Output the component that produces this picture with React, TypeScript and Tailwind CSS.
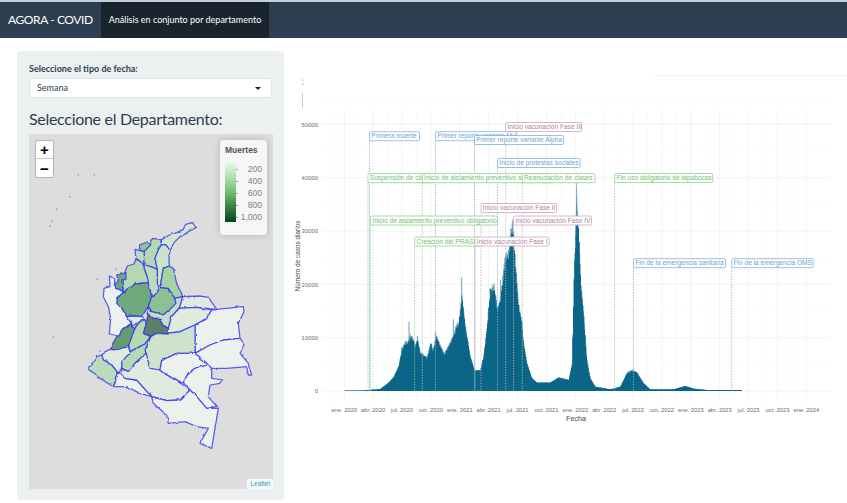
const BLUE = '#7fb2d9';
const GREEN = '#8fd08b';
const PINK = '#cba6bc';

// departments, traced in a 3x grid of the map; neighbours share vertices
const DEPARTMENTS: { points: string; fill: string }[] = [
  { points: '424,150 448,135 470,128 490,118 497,103 518,98 527,114 505,125 480,140 462,158 450,182 438,165 424,165', fill: '#d0e6cd' },
  { points: '372,185 390,165 398,145 422,148 424,165 415,180 405,205 412,238 392,230 375,225', fill: '#b5d9b2' },
  { points: '358,165 385,155 392,165 372,185 360,182', fill: '#8fc592' },
  { points: '424,165 438,165 450,182 447,205 448,228 430,235 425,265 420,292 412,285 412,238 405,205 415,180', fill: '#cbe3c8' },
  { points: '345,178 360,182 372,185 375,225 392,230 412,238 412,285 413,305 400,320 385,290 382,262 372,235 372,222 348,208', fill: '#bcdcb9' },
  { points: '322,228 342,222 348,208 372,222 372,235 382,262 385,278 345,282 310,305 305,270 315,245', fill: '#b5d9b2' },
  { points: '290,255 318,248 318,268 305,270 310,305 290,295 283,285 295,272', fill: '#6ca877' },
  { points: '310,305 345,282 385,278 395,320 385,350 365,380 340,378 320,380 305,355 290,340 292,325', fill: '#6fa97e' },
  { points: '268,255 284,270 283,285 290,295 310,305 292,325 290,340 305,355 320,380 335,400 305,420 298,438 268,432 272,385 265,350 250,320 252,295 270,290', fill: '#edf1ee' },
  { points: '320,380 340,378 365,380 375,390 360,395 335,410 335,400', fill: '#dfeade' },
  { points: '385,350 395,320 400,320 413,305 420,292 445,295 465,325 468,340 450,358 430,375 395,365', fill: '#8cc095' },
  { points: '430,235 448,228 460,235 470,280 488,320 465,325 445,295 420,292 425,265', fill: '#a5d3a3' },
  { points: '385,350 395,365 430,375 450,358 468,340 465,325 488,320 480,350 455,380 445,415 428,405 418,385 400,385 385,370', fill: '#c5dfc2' },
  { points: '488,320 540,318 565,322 590,358 530,352 478,355 480,350', fill: '#e0ebdf' },
  { points: '478,355 530,352 575,360 560,385 525,405 480,425 445,430 445,415 455,380', fill: '#e0ebdf' },
  { points: '590,358 670,350 672,365 655,400 660,445 610,450 570,465 525,490 525,405 560,385 575,360', fill: '#edf1ee' },
  { points: '385,370 400,385 418,385 428,405 445,415 445,432 410,430 392,440 370,430 378,400', fill: '#5b7f6c' },
  { points: '375,390 378,400 370,430 392,440 375,462 360,470 330,485 325,460 345,415 360,395', fill: '#b5d9b2' },
  { points: '305,420 335,400 335,410 345,415 335,440 325,470 290,480 268,478 290,440 298,438', fill: '#649b73' },
  { points: '445,432 445,430 480,425 525,405 525,490 470,490 425,512 420,540 390,535 378,490 375,480 392,440 410,430', fill: '#cde4ca' },
  { points: '392,440 375,480 378,490 345,520 325,545 305,535 305,515 328,490 330,485 360,470 375,462', fill: '#b5d9b2' },
  { points: '268,478 290,480 325,470 330,485 328,490 305,515 305,535 295,550 275,525 250,510 245,495', fill: '#e0ebdf' },
  { points: '230,500 245,495 250,510 275,525 295,550 280,590 240,565 205,538', fill: '#bcdcb9' },
  { points: '295,550 305,550 315,565 350,570 395,620 360,610 320,590 280,590', fill: '#edf1ee' },
  { points: '378,490 390,535 420,540 425,545 480,578 510,600 480,630 440,632 395,620 350,570 315,565 305,550 305,535 325,545 345,520', fill: '#e0ebdf' },
  { points: '425,512 470,490 525,490 550,510 565,525 525,535 505,550 490,578 480,578 425,545 420,540', fill: '#edf1ee' },
  { points: '525,490 570,465 610,450 660,445 675,465 660,490 685,520 695,555 685,555 680,530 620,535 575,535 565,525 550,510', fill: '#edf1ee' },
  { points: '505,550 525,535 565,525 575,535 575,565 605,570 600,580 570,585 565,620 590,650 560,655 530,620 510,600 490,578', fill: '#edf1ee' },
  { points: '395,620 440,632 480,630 510,600 530,620 560,655 595,655 575,775 540,760 565,715 530,710 495,695 445,700 440,675 400,640', fill: '#edf1ee' },
];

const ISLANDS = [[150, 20], [110, 58], [95, 93], [91, 108], [287, 238], [232, 268], [100, 442], [240, 484], [175, -46], [223, -46]];

const MONTHS = [
  'ene. 2020', 'abr. 2020', 'jul. 2020', 'oct. 2020', 'ene. 2021', 'abr. 2021', 'jul. 2021', 'oct. 2021',
  'ene. 2022', 'abr. 2022', 'jul. 2022', 'oct. 2022', 'ene. 2023', 'abr. 2023', 'jul. 2023', 'oct. 2023', 'ene. 2024',
];

// label box x / width, y, line x, colour. Order matters: later boxes cover earlier ones
const EVENTS = [
  { text: 'Primera muerte', x: 369.5, w: 50, y: 131.7, line: 369.5, color: BLUE },
  { text: 'Primer reporte variante Mu', x: 435.5, w: 81, y: 131.7, line: 435.5, color: BLUE },
  { text: 'Inicio vacunación Fase III', x: 505.7, w: 76, y: 122.5, line: 505.7, color: PINK },
  { text: 'Primer reporte variante Alpha', x: 474.5, w: 89, y: 135.5, line: 474.5, color: BLUE },
  { text: 'Inicio de protestas sociales', x: 497.5, w: 82.5, y: 158.5, line: 497.5, color: BLUE },
  { text: 'Suspensión de clases', x: 368, w: 64, y: 173.7, line: 368, color: GREEN },
  { text: 'Inicio de aislamiento preventivo sostenible', x: 422.3, w: 130, y: 173.7, line: 422.3, color: GREEN },
  { text: 'Reanudación de clases', x: 522.3, w: 72.7, y: 173.7, line: 522.3, color: GREEN },
  { text: 'Fin uso obligatorio de tapabocas', x: 614.7, w: 98, y: 173.5, line: 614.7, color: GREEN },
  { text: 'Inicio vacunación Fase II', x: 481, w: 75.7, y: 203.5, line: 481, color: PINK },
  { text: 'Inicio de aislamiento preventivo obligatorio', x: 370.5, w: 127, y: 216, line: 370.5, color: GREEN },
  { text: 'Inicio vacunación Fase IV', x: 513.5, w: 78, y: 216, line: 513.5, color: PINK },
  { text: 'Creación del PRASS', x: 414.7, w: 66, y: 237, line: 414.7, color: GREEN },
  { text: 'Inicio vacunación Fase I', x: 475, w: 74, y: 237, line: 475, color: PINK },
  { text: 'Fin de la emergencia sanitaria', x: 633.5, w: 92, y: 258.7, line: 633.5, color: BLUE },
  { text: 'Fin de la emergencia OMS', x: 731.7, w: 81.5, y: 258.7, line: 731.7, color: BLUE },
];

const TEXT_COLORS: Record<string, string> = { [BLUE]: '#6aa5d2', [GREEN]: '#72c06d', [PINK]: '#b27f9c' };

// case curve, in a 3x grid whose origin is page (290, 240)
const CURVE: [number, number][] = [
  [163, 452], [220, 451], [270, 447], [295, 428], [310, 412], [325, 380], [335, 330], [345, 310], [352, 312], [360, 290],
  [368, 300], [375, 320], [382, 300], [390, 340], [410, 355], [422, 310], [428, 335], [438, 290], [450, 320], [462, 345],
  [475, 320], [490, 290], [498, 262], [505, 255], [515, 170], [525, 260], [540, 350], [553, 392], [570, 392], [580, 350],
  [590, 265], [600, 155], [612, 150], [622, 215], [632, 170], [645, 60], [655, 50], [662, -15], [668, -35], [672, 30],
  [685, 200], [695, 250], [700, 310], [710, 370], [725, 415], [740, 428], [780, 428], [805, 413], [835, 420], [845, 375],
  [852, 80], [858, -50], [862, -60], [866, -10], [872, 140], [880, 220], [890, 360], [900, 415], [915, 440],
  [960, 448], [990, 440], [1010, 400], [1025, 392], [1040, 398], [1060, 430], [1080, 448], [1150, 448],
  [1185, 438], [1210, 446], [1250, 450], [1355, 450],
];

// lighter daily spikes that stand above the weekly curve: x, top
const SPIKES = [[335, 322], [357, 245], [382, 288], [436, 275], [490, 238], [515, 112], [600, 145], [612, 130], [632, 120], [648, 50]];

function curveAt(x: number) {
  for (let i = 1; i < CURVE.length; i++) {
    const [x0, y0] = CURVE[i - 1];
    const [x1, y1] = CURVE[i];
    if (x <= x1) return y0 + ((y1 - y0) * (x - x0)) / (x1 - x0);
  }
  return 452;
}

function noise(i: number) {
  const v = Math.sin(i * 12.9898) * 43758.5453;
  return v - Math.floor(v);
}

function buildAreas() {
  let dark = 'M344.3 391';
  let light = 'M344.3 391';
  for (let x = 163; x <= 1355; x += 2) {
    const base = curveAt(x);
    const height = 453 - base;
    const jitter = noise(Math.floor(x / 2));
    const px = 290 + x / 3;
    const next = (px + 0.67).toFixed(1);
    const dy = (240 + (base + height * 0.07 * (jitter - 0.5)) / 3).toFixed(1);
    const ly = (240 + (base - height * (0.01 + 0.06 * jitter)) / 3).toFixed(1);
    dark += `L${px.toFixed(1)} ${dy}L${next} ${dy}`;
    light += `L${px.toFixed(1)} ${ly}L${next} ${ly}`;
  }
  return { dark: `${dark}L741.7 391Z`, light: `${light}L741.7 391Z` };
}

function CasesChart() {
  const { dark, light } = buildAreas();
  const top = 110;
  const bottom = 403;
  const yTicks = [0, 10000, 20000, 30000, 40000, 50000];
  const xOf = (i: number) => 344.3 + i * 28.88;
  const yOf = (v: number) => 391 - v * 0.005333;

  return (
    <svg viewBox="290 38 557 465" className="w-[557px] h-[465px] block" style={{ fontFamily: '"Liberation Sans", Arial, sans-serif' }}>
      <line x1="652" x2="847" y1="75.5" y2="75.5" stroke="#f0f0f0" strokeWidth="0.8" />
      <rect x="302" y="79" width="1.5" height="3" fill="#f5d9ae" />
      <rect x="302" y="83.5" width="1.5" height="1.5" fill="#e8a860" />
      <line x1="302.5" x2="302.5" y1="93" y2="108" stroke="#cccccc" strokeWidth="1" />

      {MONTHS.map((_, i) => (
        <g key={i}>
          <line x1={xOf(i)} x2={xOf(i)} y1={top} y2={bottom} stroke="#f0f0f0" strokeWidth="0.8" />
          <line x1={xOf(i) - 14.44} x2={xOf(i) - 14.44} y1={top} y2={bottom} stroke="#f7f7f7" strokeWidth="0.6" />
        </g>
      ))}
      {yTicks.map((v) => (
        <g key={v}>
          <line x1="322" x2="831" y1={yOf(v)} y2={yOf(v)} stroke="#f0f0f0" strokeWidth="0.8" />
          <line x1="322" x2="831" y1={yOf(v + 5000)} y2={yOf(v + 5000)} stroke="#f7f7f7" strokeWidth="0.6" />
          <text x="318" y={yOf(v) + 2.2} textAnchor="end" fontSize="5.9" fill="#6b6b6b">{v}</text>
        </g>
      ))}

      <path d={light} fill="#6ba3ba" />
      {SPIKES.map(([x, y]) => (
        <rect key={x} x={290 + x / 3 - 0.5} y={240 + y / 3} width="1" height={(curveAt(x) - y) / 3 + 2} fill="#6ba3ba" />
      ))}
      <path d="M575 240 L576 210 L576.7 169 L577.4 210 L578.6 240Z" fill="#4f93ae" />
      <path d={dark} fill="#0a6587" />

      {EVENTS.map((e) => (
        <line key={`l-${e.text}`} x1={e.line} x2={e.line} y1={e.y + 9} y2="391" stroke={e.color} strokeWidth="0.8" strokeDasharray="1.5 1.2" />
      ))}
      {EVENTS.map((e) => (
        <g key={e.text}>
          <rect x={e.x} y={e.y} width={e.w} height="9" rx="1.5" fill="#ffffff" stroke={e.color} strokeWidth="0.8" />
          <text x={e.x + 1.8} y={e.y + 6.7} fontSize="6.6" fill={TEXT_COLORS[e.color]}>
            {e.text}
          </text>
        </g>
      ))}

      {MONTHS.map((m, i) => (
        <text key={m} x={xOf(i)} y="412" textAnchor="middle" fontSize="5.8" fill="#6b6b6b">{m}</text>
      ))}
      <text x="576" y="421" textAnchor="middle" fontSize="7.2" fill="#444444">Fecha</text>
      <text transform="translate(300 256) rotate(-90)" textAnchor="middle" fontSize="6.4" fill="#444444">Número de casos diarios</text>
    </svg>
  );
}

function MapPanel() {
  return (
    <div className="relative w-[244px] h-[355px] bg-[#dddddd] overflow-hidden">
      <svg viewBox="27 -168 732 1065" className="w-full h-full block">
        <defs>
          <filter id="rough" x="-5%" y="-5%" width="110%" height="110%">
            <feTurbulence type="fractalNoise" baseFrequency="0.05" numOctaves="2" seed="4" result="noise" />
            <feDisplacementMap in="SourceGraphic" in2="noise" scale="8" xChannelSelector="R" yChannelSelector="G" />
          </filter>
        </defs>
        <g filter="url(#rough)">
          {DEPARTMENTS.map((d, i) => (
            <polygon key={i} points={d.points} fill={d.fill} stroke="#2e2ef2" strokeOpacity="0.75" strokeWidth="3.8" strokeLinejoin="round" />
          ))}
        </g>
        {ISLANDS.map(([x, y], i) => (
          <circle key={i} cx={x} cy={y} r="2.2" fill="#7a7af0" />
        ))}
      </svg>

      <div className="absolute left-[6px] top-[6px] w-[19px] h-[38px] flex flex-col bg-white rounded-[2px] border border-[#b5b5b5] font-['Liberation_Sans',sans-serif] text-black">
        <div className="h-[18px] flex items-center justify-center border-b border-[#cccccc] text-[15px] font-bold leading-none">+</div>
        <div className="h-[18px] flex items-center justify-center text-[15px] font-bold leading-none">−</div>
      </div>

      <div className="absolute left-[191px] top-[6px] w-[47px] h-[95px] rounded-[4px] bg-[#f6f6f6] shadow-[0_0_6px_rgba(0,0,0,0.2)] pl-[5px] pt-[4px] font-['Liberation_Sans',sans-serif]">
        <div className="text-[8.5px] leading-[12px] font-bold text-[#555555]">Muertes</div>
        <div className="flex mt-[4px]">
          <div className="w-[11px] h-[62px] bg-gradient-to-b from-[#f7fcf5] via-[#74c476] to-[#00441b]" />
          <div className="w-[26px] h-[62px] flex flex-col pt-[4px] gap-[1px] text-[8.5px] leading-[11px] text-[#808080]">
            {['200', '400', '600', '800', '1,000'].map((v) => (
              <div key={v} className="flex items-center justify-between">
                <span className="w-[2px] h-px bg-[#999999]" />
                <span>{v}</span>
              </div>
            ))}
          </div>
        </div>
      </div>

      <div className="absolute right-0 bottom-0 h-[10px] px-[3px] bg-white/80 text-[6.5px] leading-[10px] text-[#2b9bc4] font-['Liberation_Sans',sans-serif]">Leaflet</div>
    </div>
  );
}

export default function App() {
  return (
    <div className="w-[847px] h-[503px] overflow-hidden bg-white font-['Lato',sans-serif]">
      <div className="h-[2px] bg-[#c3cede]" />
      <nav className="h-[36px] bg-[#2c3e50] flex items-stretch">
        <div className="w-[101px] pl-[8px] flex items-center text-[12px] tracking-[-0.4px] text-white whitespace-nowrap">AGORA - COVID</div>
        <div className="w-[168px] flex items-center justify-center bg-[#1a242f] text-[9px] text-white whitespace-nowrap">Análisis en conjunto por departamento</div>
      </nav>

      <div className="flex items-start">
        <aside className="ml-[17px] mt-[13px] w-[267px] h-[449px] rounded-[3px] bg-[#ecf0f1] px-[12px] pt-[12px] shrink-0">
          <div className="text-[9px] leading-[12px] font-bold text-[#2c3e50]">Seleccione el tipo de fecha:</div>
          <div className="mt-[3px] w-[243px] h-[20px] bg-white rounded-[3px] border border-[#dce1e3] flex items-center justify-between pl-[7px] pr-[10px] text-[9px] text-[#2c3e50]">
            <span>Semana</span>
            <span className="w-0 h-0 border-x-[3.5px] border-x-transparent border-t-[3.5px] border-t-[#222222]" />
          </div>
          <h2 className="mt-[10px] mb-[4px] text-[16px] leading-[22px] font-normal tracking-[-0.3px] text-[#2c3e50] whitespace-nowrap">Seleccione el Departamento:</h2>
          <MapPanel />
        </aside>
        <main className="ml-[6px]">
          <CasesChart />
        </main>
      </div>
    </div>
  );
}
